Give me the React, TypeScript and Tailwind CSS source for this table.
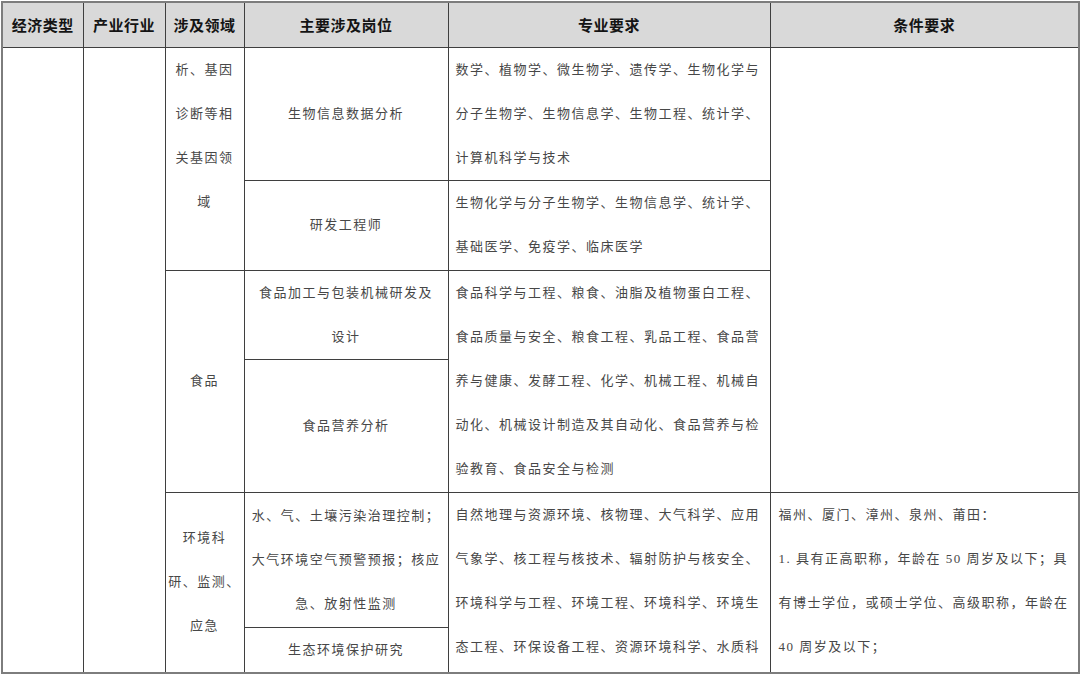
const cell = 'border border-[#3f3f3f] p-0'

function Lines({ lines, className = '' }: { lines: string[]; className?: string }) {
  return (
    <div className={className}>
      {lines.map((l, i) => (
        <div key={i} className="whitespace-nowrap leading-[44px]">
          {l}
        </div>
      ))}
    </div>
  )
}

const headers = ['经济类型', '产业行业', '涉及领域', '主要涉及岗位', '专业要求', '条件要求']

export default function App() {
  return (
    <div className="h-[674px] w-[1080px] overflow-hidden bg-white pl-[1px] pt-[1px]">
      <table
        className="w-[1077px] table-fixed border-collapse border-2 border-[#7d7d7d] text-[13px] tracking-[1.5px] text-[#474747]"
        style={{ fontFamily: '"Liberation Serif", "Noto Sans CJK SC", serif' }}
      >
        <colgroup>
          <col className="w-[81px]" />
          <col className="w-[82px]" />
          <col className="w-[79px]" />
          <col className="w-[204px]" />
          <col className="w-[322px]" />
          <col className="w-[309px]" />
        </colgroup>
        <thead>
          <tr className="h-[45px] bg-[#d9d9d9]">
            {headers.map((h) => (
              <th
                key={h}
                className={`${cell} text-center align-middle text-[15px] font-bold tracking-[0.5px] text-[#141414]`}
                style={{ fontFamily: '"Noto Sans CJK SC", sans-serif' }}
              >
                {h}
              </th>
            ))}
          </tr>
        </thead>
        <tbody>
          <tr className="h-[133px]">
            <td rowSpan={6} className={cell} />
            <td rowSpan={6} className={cell} />
            <td rowSpan={2} className={`${cell} align-top text-center`}>
              <Lines lines={['析、基因', '诊断等相', '关基因领', '域']} />
            </td>
            <td className={`${cell} align-middle text-center`}>
              <Lines lines={['生物信息数据分析']} />
            </td>
            <td className={`${cell} align-top pl-[7px]`}>
              <Lines
                lines={[
                  '数学、植物学、微生物学、遗传学、生物化学与',
                  '分子生物学、生物信息学、生物工程、统计学、',
                  '计算机科学与技术',
                ]}
              />
            </td>
            <td rowSpan={4} className={cell} />
          </tr>
          <tr className="h-[90px]">
            <td className={`${cell} align-middle text-center`}>
              <Lines lines={['研发工程师']} />
            </td>
            <td className={`${cell} align-top pl-[7px]`}>
              <Lines lines={['生物化学与分子生物学、生物信息学、统计学、', '基础医学、免疫学、临床医学']} />
            </td>
          </tr>
          <tr className="h-[89px]">
            <td rowSpan={2} className={`${cell} align-middle text-center`}>
              <Lines lines={['食品']} />
            </td>
            <td className={`${cell} align-middle text-center`}>
              <Lines lines={['食品加工与包装机械研发及', '设计']} />
            </td>
            <td rowSpan={2} className={`${cell} align-top pl-[7px]`}>
              <Lines
                lines={[
                  '食品科学与工程、粮食、油脂及植物蛋白工程、',
                  '食品质量与安全、粮食工程、乳品工程、食品营',
                  '养与健康、发酵工程、化学、机械工程、机械自',
                  '动化、机械设计制造及其自动化、食品营养与检',
                  '验教育、食品安全与检测',
                ]}
              />
            </td>
          </tr>
          <tr className="h-[133px]">
            <td className={`${cell} align-middle text-center`}>
              <Lines lines={['食品营养分析']} />
            </td>
          </tr>
          <tr className="h-[135px]">
            <td rowSpan={2} className={`${cell} align-middle text-center`}>
              <Lines lines={['环境科', '研、监测、', '应急']} />
            </td>
            <td className={`${cell} align-middle text-center`}>
              <Lines lines={['水、气、土壤污染治理控制；', '大气环境空气预警预报；核应', '急、放射性监测']} />
            </td>
            <td rowSpan={2} className={`${cell} align-top pl-[7px]`}>
              <Lines
                lines={[
                  '自然地理与资源环境、核物理、大气科学、应用',
                  '气象学、核工程与核技术、辐射防护与核安全、',
                  '环境科学与工程、环境工程、环境科学、环境生',
                  '态工程、环保设备工程、资源环境科学、水质科',
                ]}
              />
            </td>
            <td rowSpan={2} className={`${cell} align-top pl-[8px]`}>
              <Lines
                lines={[
                  '福州、厦门、漳州、泉州、莆田：',
                  '1. 具有正高职称，年龄在 50 周岁及以下；具',
                  '有博士学位，或硕士学位、高级职称，年龄在',
                  '40 周岁及以下；',
                ]}
              />
            </td>
          </tr>
          <tr className="h-[45px]">
            <td className={`${cell} align-middle text-center`}>
              <Lines lines={['生态环境保护研究']} />
            </td>
          </tr>
        </tbody>
      </table>
    </div>
  )
}
